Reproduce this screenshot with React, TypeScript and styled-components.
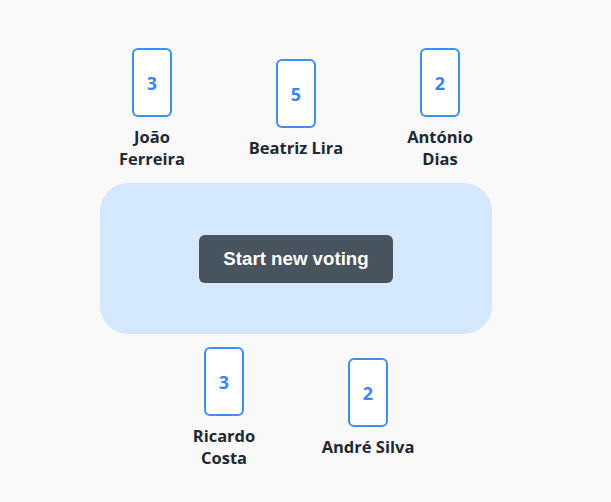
import styled, { createGlobalStyle } from "styled-components";

const GlobalStyle = createGlobalStyle`
  body {
    margin: 0;
    background: #f9f9f9;
    font-family: "Open Sans", "Noto Sans", sans-serif;
  }
`;

interface Player {
  name: string;
  vote: number;
}

const topPlayers: Player[] = [
  { name: "João Ferreira", vote: 3 },
  { name: "Beatriz Lira", vote: 5 },
  { name: "António Dias", vote: 2 },
];

const bottomPlayers: Player[] = [
  { name: "Ricardo Costa", vote: 3 },
  { name: "André Silva", vote: 2 },
];

function PlayerSeat({ name, vote }: Player) {
  return (
    <Seat>
      <Card>{vote}</Card>
      <Name>{name}</Name>
    </Seat>
  );
}

export default function App() {
  return (
    <>
      <GlobalStyle />
      <Board>
        <SeatRow>
          {topPlayers.map((p) => (
            <PlayerSeat key={p.name} {...p} />
          ))}
        </SeatRow>
        <Table>
          <StartButton>Start new voting</StartButton>
        </Table>
        <SeatRow>
          {bottomPlayers.map((p) => (
            <PlayerSeat key={p.name} {...p} />
          ))}
        </SeatRow>
      </Board>
    </>
  );
}

const Board = styled.div`
  width: 592px;
  padding-top: 48px;
  display: flex;
  flex-direction: column;
  align-items: center;
  gap: 13px;
`;

const SeatRow = styled.div`
  display: flex;
  align-items: center;
  justify-content: center;
  gap: 44px;
`;

const Seat = styled.div`
  width: 100px;
  display: flex;
  flex-direction: column;
  align-items: center;
  gap: 9px;
`;

const Card = styled.div`
  box-sizing: border-box;
  width: 40px;
  height: 69px;
  border: 2px solid #3d8ff5;
  border-radius: 6px;
  background: #fff;
  display: flex;
  align-items: center;
  justify-content: center;
  color: #3b86f4;
  font-size: 18px;
  font-weight: 700;
`;

const Name = styled.div`
  text-align: center;
  color: #1e2833;
  font-size: 16.5px;
  font-weight: 700;
  line-height: 22px;
`;

const Table = styled.div`
  width: 392px;
  height: 151px;
  border-radius: 28px;
  background: #d6e8fe;
  display: flex;
  align-items: center;
  justify-content: center;
`;

const StartButton = styled.button`
  height: 48px;
  padding: 0 24px;
  border: none;
  border-radius: 6px;
  background: #48545e;
  color: #fff;
  font-family: "Liberation Sans", Arial, sans-serif;
  font-size: 18.7px;
  font-weight: 700;
  cursor: pointer;
`;
